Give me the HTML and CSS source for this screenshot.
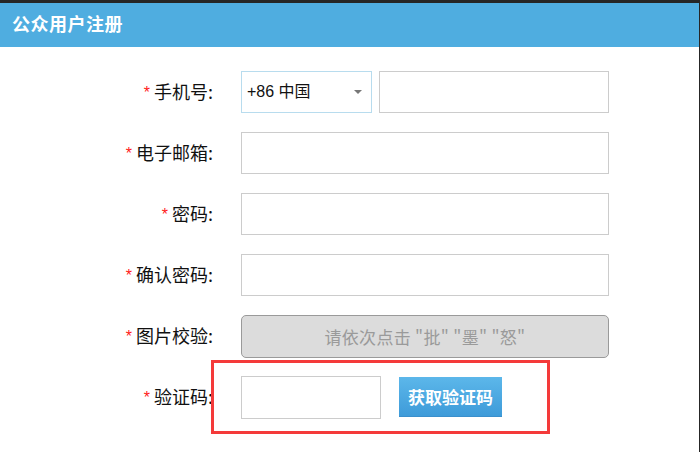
FILE: index.html
```html
<!DOCTYPE html>
<html lang="zh-CN">
<head>
<meta charset="utf-8">
<title>公众用户注册</title>
<link rel="stylesheet" href="styles.css">
</head>
<body>
<div class="frame">
  <div class="header"><h1 class="title">公众用户注册</h1></div>
  <form class="form">
    <div class="row">
      <label class="label"><span class="star">*</span>手机号:</label>
      <div class="control phone">
        <div class="select"><span class="select-text">+86 中国</span><span class="arrow"></span></div>
        <div class="input phone-input"></div>
      </div>
    </div>
    <div class="row">
      <label class="label"><span class="star">*</span>电子邮箱:</label>
      <div class="control"><div class="input"></div></div>
    </div>
    <div class="row">
      <label class="label"><span class="star">*</span>密码:</label>
      <div class="control"><div class="input"></div></div>
    </div>
    <div class="row">
      <label class="label"><span class="star">*</span>确认密码:</label>
      <div class="control"><div class="input"></div></div>
    </div>
    <div class="row">
      <label class="label"><span class="star">*</span>图片校验:</label>
      <div class="control"><div class="captcha">请依次点击 "批" "墨" "怒"</div></div>
    </div>
    <div class="row last">
      <label class="label"><span class="star">*</span>验证码:</label>
      <div class="control code">
        <div class="input code-input"></div>
        <div class="get-code">获取验证码</div>
      </div>
      <div class="highlight"></div>
    </div>
  </form>
</div>
</body>
</html>
```
FILE: styles.css
```css
* { box-sizing: border-box; }
html, body { margin: 0; padding: 0; }
body {
  width: 700px;
  height: 452px;
  background: #ffffff;
  font-family: "Noto Sans CJK SC", "Liberation Sans", sans-serif;
  overflow: hidden;
}
.frame {
  height: 452px;
  border-top: 3px solid #262626;
  border-right: 1px solid #262626;
}
.header {
  height: 44px;
  background: #4fade0;
  padding: 0 0 0 12px;
  display: flex;
  align-items: center;
}
.title {
  margin: 0 0 5px 0;
  font-size: 18px;
  font-weight: bold;
  color: #ffffff;
  letter-spacing: 0.5px;
}
.form {
  padding-top: 24px;
  display: flex;
  flex-direction: column;
  gap: 19px;
}
.row {
  position: relative;
  display: flex;
  align-items: center;
  height: 42px;
}
.label {
  width: 213px;
  text-align: right;
  font-size: 18px;
  color: #111;
  margin-right: 28px;
  line-height: 20px;
}
.star {
  color: #ff1a1a;
  font-family: "Liberation Sans", sans-serif;
  font-size: 16px;
  margin-right: 4px;
  position: relative;
  top: -1px;
}
.control {
  width: 368px;
  height: 42px;
  display: flex;
}
.input {
  width: 368px;
  height: 42px;
  border: 1px solid #cccccc;
  background: #fff;
}
.phone { gap: 7px; }
.select {
  width: 131px;
  height: 42px;
  border: 1px solid #b8dcee;
  display: flex;
  align-items: center;
  justify-content: space-between;
  padding: 0 9px 0 5px;
}
.select-text {
  font-family: "Liberation Sans", "Noto Sans CJK SC", sans-serif;
  font-size: 16px;
  color: #111;
  position: relative;
  top: -2px;
}
.arrow {
  width: 0;
  height: 0;
  border-left: 4px solid transparent;
  border-right: 4px solid transparent;
  border-top: 4px solid #777;
}
.phone-input { width: 230px; }
.captcha {
  width: 368px;
  height: 43px;
  border: 1px solid #9a9a9a;
  border-radius: 5px;
  background: #dcdcdc;
  color: #9a9a9a;
  font-size: 17px;
  display: flex;
  align-items: center;
  justify-content: center;
  letter-spacing: 0.3px;
}
.code { align-items: center; gap: 18px; }
.code-input { width: 140px; height: 43px; }
.get-code {
  width: 103px;
  height: 40px;
  background: linear-gradient(#5cb7ea, #3e9bd9);
  border-bottom: 1px solid #3a8fcc;
  color: #fff;
  font-weight: bold;
  font-size: 17px;
  display: flex;
  align-items: center;
  justify-content: center;
  margin-top: -1px;
}
.highlight {
  position: absolute;
  left: 211px;
  top: -16px;
  width: 339px;
  height: 74px;
  border: 3px solid #f43a3a;
  pointer-events: none;
}
```
